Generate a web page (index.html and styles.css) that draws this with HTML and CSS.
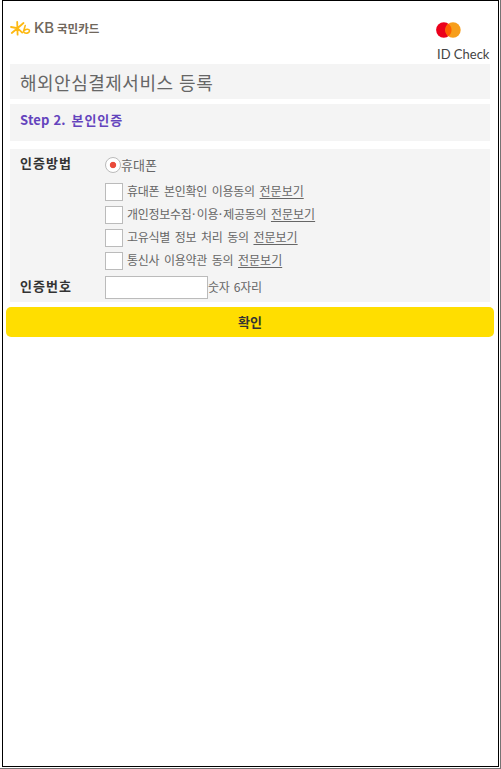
FILE: index.html
```html
<!DOCTYPE html>
<html lang="ko">
<head>
    <meta charset="UTF-8">
    <meta name="viewport" content="width=device-width, initial-scale=1.0">
    <title>해외안심결제서비스 등록</title>
    <link rel="stylesheet" href="styles.css">
</head>
<body>
    <div class="popup">
        <div class="header">
            <div class="kb-logo">
                <svg width="21" height="16" viewBox="0 0 21 16" fill="none" stroke="#fdb913" stroke-linecap="round">
                    <path d="M1 7L7.5 8.2L13.5 3M7.2 2L7.6 14.6M7.5 8.2L1.8 13M7.5 8.2L12.2 12.6" stroke-width="1.8"/>
                    <path d="M15.2 5.6L13.4 11.8C15 14.2 19.4 13.2 19.5 10.8C19.5 8.8 16.4 8.8 14.4 10.4" stroke-width="1.6"/>
                </svg>
                <span class="kb">KB</span><span class="card">국민카드</span>
            </div>
            <div class="id-check">
                <svg width="25" height="16" viewBox="0 0 25 16">
                    <circle cx="7.8" cy="8" r="7.7" fill="#eb001b"/>
                    <circle cx="17" cy="8" r="7.7" fill="#f79e1b"/>
                    <path d="M12.4 1.8A7.7 7.7 0 0 1 12.4 14.2A7.7 7.7 0 0 1 12.4 1.8Z" fill="#ff5f00"/>
                </svg>
                <span>ID Check</span>
            </div>
        </div>

        <h1>해외안심결제서비스 등록</h1>
        <h2><span class="step">Step 2.</span> 본인인증</h2>

        <div class="form">
            <div class="row">
                <div class="label">인증방법</div>
                <div class="field">
                    <label class="phone"><span class="radio"></span>휴대폰</label>
                    <ul class="agree">
                        <li><span class="check"></span>휴대폰 본인확인 이용동의 <a>전문보기</a></li>
                        <li><span class="check"></span>개인정보수집<i>·</i>이용<i>·</i>제공동의 <a>전문보기</a></li>
                        <li><span class="check"></span>고유식별 정보 처리 동의 <a>전문보기</a></li>
                        <li><span class="check"></span>통신사 이용약관 동의 <a>전문보기</a></li>
                    </ul>
                </div>
            </div>
            <div class="row">
                <div class="label">인증번호</div>
                <div class="field number"><input type="text" maxlength="6"><span>숫자 6자리</span></div>
            </div>
        </div>

        <button type="button">확인</button>
    </div>
</body>
</html>
```

FILE: styles.css
```css
* {
    margin: 0;
    padding: 0;
    box-sizing: border-box;
}

body {
    width: 501px;
    height: 769px;
    padding: 0 2px;
    border-right: 1px solid #767373;
    border-bottom: 1px solid #767373;
    background: #fff;
    font-family: "Noto Sans CJK KR", sans-serif;
    font-size: 12px;
    color: #666;
    overflow: hidden;
}

.popup {
    width: 497px;
    height: 767px;
    border: 1px solid #000;
    padding: 0 3px;
}

.header {
    display: flex;
    justify-content: space-between;
    height: 63px;
    padding: 0 4px;
}

.kb-logo {
    display: flex;
    align-items: center;
    height: 16px;
    margin-top: 19px;
    color: #70675c;
    font-weight: bold;
}

.kb {
    margin-left: 3px;
    width: 23px;
    font: 500 15px/16px Inter, sans-serif;
}

.card {
    font-size: 11.5px;
    line-height: 16px;
}

.id-check {
    width: 55px;
    padding-top: 21px;
}

.id-check svg {
    display: block;
}

.id-check span {
    display: block;
    margin-top: 8px;
    padding-left: 1px;
    font: 13px/16px Lato, sans-serif;
    color: #444;
    white-space: nowrap;
}

h1 {
    height: 35px;
    margin: 0 5px 5px 4px;
    padding-left: 10px;
    background: #f4f4f4;
    font-size: 18px;
    font-weight: normal;
    line-height: 37px;
    letter-spacing: 0.5px;
}

h2 {
    height: 37px;
    margin: 0 5px 8px 4px;
    padding-left: 10px;
    background: #f4f4f4;
    font-size: 13px;
    line-height: 32px;
    letter-spacing: 1px;
    color: #6444bd;
}

.step {
    margin-right: 1px;
    letter-spacing: 0.2px;
}

.form {
    height: 153px;
    margin: 0 5px 5px 4px;
    padding: 7px 0 0 10px;
    background: #f4f4f4;
}

.row {
    display: flex;
}

.label {
    width: 85px;
    font-size: 13px;
    font-weight: bold;
    line-height: 14px;
    letter-spacing: 1px;
    color: #333;
}

.phone {
    display: flex;
    align-items: center;
    height: 18px;
    font-size: 13px;
    line-height: 16px;
}

.radio {
    width: 16px;
    height: 16px;
    border: 1px solid #bbb;
    border-radius: 50%;
    background: radial-gradient(circle, #e94b3c 2.8px, #fff 3.6px);
}

.agree {
    margin-top: 9px;
    list-style: none;
}

.agree li {
    display: flex;
    height: 18px;
    margin-bottom: 5px;
    line-height: 16px;
    white-space: pre;
    letter-spacing: -0.27px;
    word-spacing: 1.6px;
}

.agree li:last-child {
    margin-bottom: 6px;
}

.agree i {
    width: 4px;
    margin-right: 1px;
    font-style: normal;
    text-align: center;
}

.agree a {
    letter-spacing: 0;
    text-decoration: underline;
    text-underline-offset: 2px;
}

.check {
    width: 18px;
    height: 18px;
    margin-right: 4px;
    border: 1px solid #bbb;
    background: #fff;
}

.number {
    display: flex;
    line-height: 21px;
    letter-spacing: -0.3px;
    word-spacing: 1.3px;
}

.number input {
    width: 103px;
    height: 23px;
    border: 1px solid #bbb;
    background: #fff;
}

.row:last-child .label {
    padding-top: 3px;
}

button {
    display: block;
    width: 488px;
    height: 30px;
    border: 0;
    border-radius: 5px;
    background: #ffde00;
    font: bold 13px/30px "Noto Sans CJK KR", sans-serif;
    color: #333;
}
```
